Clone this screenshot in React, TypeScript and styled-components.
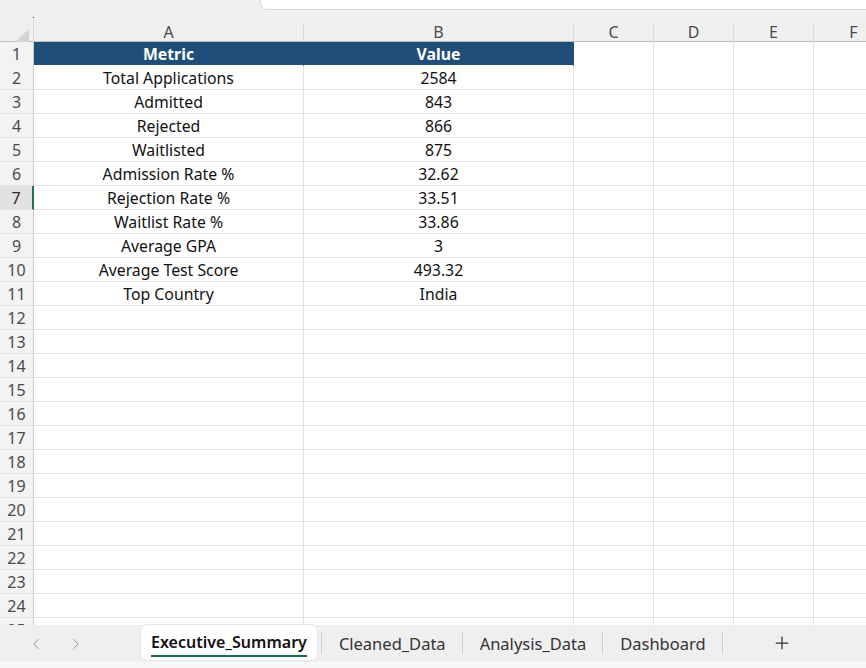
import React from "react";
import styled, { createGlobalStyle } from "styled-components";
import { ChevronLeft, ChevronRight, Plus } from "lucide-react";

const Global = createGlobalStyle`
  html, body { margin: 0; padding: 0; background: #f0f0f0; }
  body { font-family: "Noto Sans", "Open Sans", Arial, sans-serif; overflow: hidden; }
  * { box-sizing: border-box; }
`;

const COLS = "34px 270px 270px 80px 80px 80px 80px";

const Page = styled.div`
  width: 866px;
  height: 668px;
  display: flex;
  flex-direction: column;
  background: #f0f0f0;
  overflow: hidden;
`;

const TopStrip = styled.div`
  height: 21px;
  display: flex;
  justify-content: flex-end;
  align-items: flex-start;
  position: relative;
`;

const NameBoxEdge = styled.div`
  width: 606px;
  height: 10px;
  background: #ffffff;
  border-left: 1px solid #d6d6d6;
  border-bottom: 1px solid #d6d6d6;
  border-bottom-left-radius: 7px;
`;

const Dot = styled.span`
  position: absolute;
  left: 33px;
  top: 17px;
  width: 1px;
  height: 1px;
  background: #222;
`;

const ColHeaderRow = styled.div`
  display: grid;
  grid-template-columns: ${COLS};
  height: 21px;
  border-bottom: 1px solid #bdbdbd;
`;

const Corner = styled.div`
  display: flex;
  justify-content: flex-end;
  align-items: flex-end;
  padding: 0 4px 3px 0;
  border-right: 1px solid #d6d6d6;
`;

const ColHead = styled.div`
  display: flex;
  align-items: center;
  justify-content: center;
  color: #4a4a4a;
  font-size: 16px;
  line-height: 18px;
  border-right: 1px solid #d9d9d9;
  margin-top: 2px;
  padding-bottom: 4px;
`;

const Sheet = styled.div`
  flex: 1;
  overflow: hidden;
  background: #ffffff;
`;

const Row = styled.div`
  display: grid;
  grid-template-columns: ${COLS};
  height: 24px;
`;

const RowHead = styled.div<{ $active?: boolean }>`
  display: flex;
  align-items: center;
  justify-content: center;
  font-size: 16px;
  color: ${(p) => (p.$active ? "#2b2b2b" : "#4a4a4a")};
  background: ${(p) => (p.$active ? "#e2e2e2" : "#f3f3f3")};
  border-right: ${(p) => (p.$active ? "2px solid #217346" : "1px solid #c9c9c9")};
  border-bottom: 1px solid #e2e2e2;
`;

const Cell = styled.div<{ $head?: boolean }>`
  display: flex;
  align-items: center;
  justify-content: center;
  font-size: 15.8px;
  white-space: nowrap;
  color: ${(p) => (p.$head ? "#ffffff" : "#111111")};
  font-weight: ${(p) => (p.$head ? 700 : 400)};
  background: ${(p) => (p.$head ? "#1f4e79" : "#ffffff")};
  border-right: 1px solid ${(p) => (p.$head ? "#1f4e79" : "#e1e1e1")};
  border-bottom: ${(p) => (p.$head ? "2px solid #ffffff" : "1px solid #e1e1e1")};
  padding-top: 1px;
`;

const TabBar = styled.div`
  height: 38px;
  display: flex;
  align-items: stretch;
  background: #efefef;
  border-bottom: 1px solid #fafafa;
`;

const Nav = styled.div`
  width: 141px;
  display: flex;
  align-items: center;
  padding-left: 27px;
  gap: 22px;
  color: #8f8f8f;
`;

const Tab = styled.div<{ $active?: boolean }>`
  display: flex;
  align-items: center;
  height: 35px;
  white-space: nowrap;
  position: relative;
  padding: ${(p) => (p.$active ? "0 10px 2px" : "2px 16px 0 17px")};
  margin-right: ${(p) => (p.$active ? "4px" : "0")};
  font-size: ${(p) => (p.$active ? "16px" : "16.5px")};
  color: ${(p) => (p.$active ? "#111" : "#333")};
  font-weight: ${(p) => (p.$active ? 600 : 400)};
  background: ${(p) => (p.$active ? "#ffffff" : "transparent")};
  border-radius: 0 0 6px 6px;
  border-top-left-radius: 6px;
  border-top-right-radius: 6px;
  ${(p) => (p.$active ? "box-shadow: 0 0 0 1px #e6e6e6;" : "")}
`;

const Underline = styled.span`
  position: absolute;
  left: 10px;
  right: 10px;
  bottom: 3px;
  height: 2px;
  background: #1b6b4c;
`;

const Sep = styled.div`
  width: 1px;
  height: 22px;
  align-self: center;
  margin-top: -2px;
  background: #cfcfcf;
`;

const AddBtn = styled.div`
  width: 118px;
  display: flex;
  align-items: center;
  justify-content: center;
  color: #333;
  margin-top: -2px;
`;

const Footer = styled.div`
  height: 5px;
  background: #f7f7f7;
`;

const data: [string, string][] = [
  ["Total Applications", "2584"],
  ["Admitted", "843"],
  ["Rejected", "866"],
  ["Waitlisted", "875"],
  ["Admission Rate %", "32.62"],
  ["Rejection Rate %", "33.51"],
  ["Waitlist Rate %", "33.86"],
  ["Average GPA", "3"],
  ["Average Test Score", "493.32"],
  ["Top Country", "India"],
];

const letters = ["A", "B", "C", "D", "E", "F"];

export default function App() {
  const rows = Array.from({ length: 25 }, (_, i) => i + 1);
  return (
    <Page>
      <Global />
      <TopStrip>
        <Dot />
        <NameBoxEdge />
      </TopStrip>
      <ColHeaderRow>
        <Corner>
          <svg width="14" height="13" viewBox="0 0 14 13">
            <polygon points="14,0 14,13 0,13" fill="#d4d4d4" />
          </svg>
        </Corner>
        {letters.map((l) => (
          <ColHead key={l}>{l}</ColHead>
        ))}
      </ColHeaderRow>
      <Sheet>
        <Row>
          <RowHead>1</RowHead>
          <Cell $head>Metric</Cell>
          <Cell $head>Value</Cell>
          <Cell />
          <Cell />
          <Cell />
          <Cell />
        </Row>
        {rows.slice(1).map((n) => {
          const d = data[n - 2];
          return (
            <Row key={n}>
              <RowHead $active={n === 7}>{n}</RowHead>
              <Cell>{d ? d[0] : ""}</Cell>
              <Cell>{d ? d[1] : ""}</Cell>
              <Cell />
              <Cell />
              <Cell />
              <Cell />
            </Row>
          );
        })}
      </Sheet>
      <TabBar>
        <Nav>
          <ChevronLeft size={18} strokeWidth={1.3} />
          <ChevronRight size={18} strokeWidth={1.3} />
        </Nav>
        <Tab $active>
          Executive_Summary
          <Underline />
        </Tab>
        <Sep />
        <Tab>Cleaned_Data</Tab>
        <Sep />
        <Tab>Analysis_Data</Tab>
        <Sep />
        <Tab>Dashboard</Tab>
        <Sep />
        <AddBtn>
          <Plus size={20} strokeWidth={1.5} />
        </AddBtn>
      </TabBar>
      <Footer />
    </Page>
  );
}
